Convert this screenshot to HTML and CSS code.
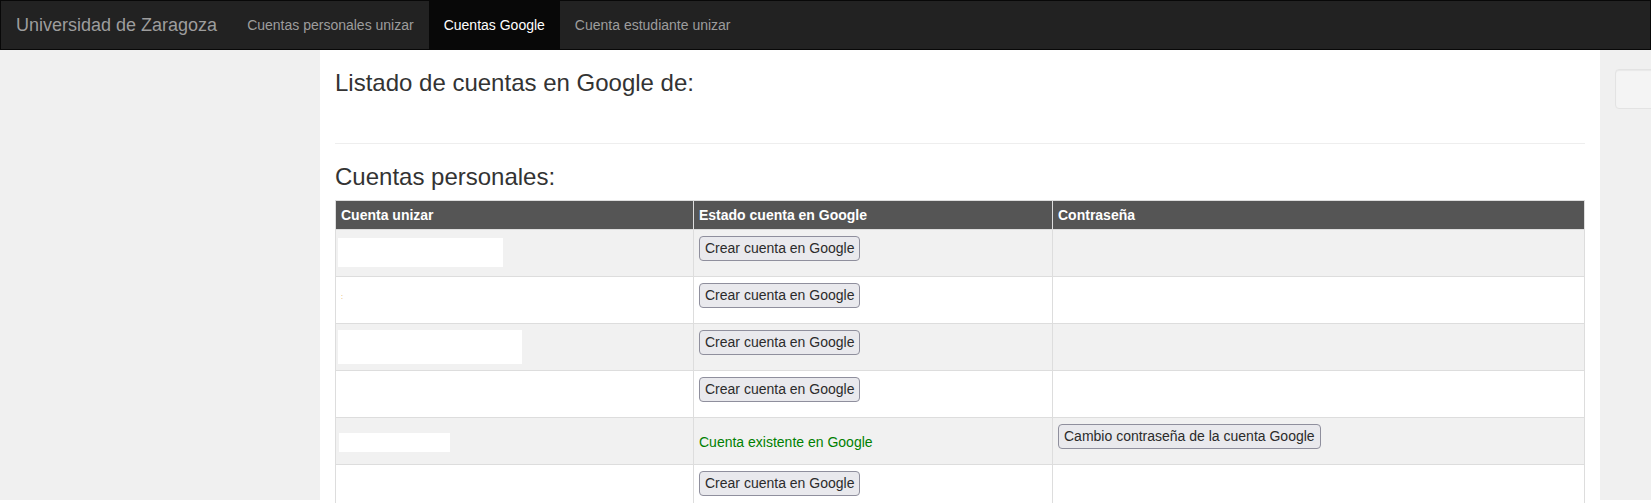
FILE: index.html
```html
<!DOCTYPE html>
<html lang="es">
<head>
<meta charset="utf-8">
<title>Cuentas Google - Universidad de Zaragoza</title>
<link rel="stylesheet" href="styles.css">
</head>
<body>
<nav class="navbar">
  <a class="brand" href="#">Universidad de Zaragoza</a>
  <ul class="nav">
    <li><a href="#">Cuentas personales unizar</a></li>
    <li class="active"><a href="#">Cuentas Google</a></li>
    <li><a href="#">Cuenta estudiante unizar</a></li>
  </ul>
</nav>
<div class="layout">
  <aside class="side"></aside>
  <main class="main">
    <h3 class="title">Listado de cuentas en Google de:</h3>
    <hr class="divider">
    <h3 class="subtitle">Cuentas personales:</h3>
    <table class="accounts">
      <colgroup>
        <col class="c1">
        <col class="c2">
        <col class="c3">
      </colgroup>
      <thead>
        <tr><th>Cuenta unizar</th><th>Estado cuenta en Google</th><th>Contraseña</th></tr>
      </thead>
      <tbody>
        <tr>
          <td><div class="redact redact-1"></div></td>
          <td><button class="btn" type="button">Crear cuenta en Google</button></td>
          <td></td>
        </tr>
        <tr>
          <td><span class="mark">:</span></td>
          <td><button class="btn" type="button">Crear cuenta en Google</button></td>
          <td></td>
        </tr>
        <tr>
          <td><div class="redact redact-3"></div></td>
          <td><button class="btn" type="button">Crear cuenta en Google</button></td>
          <td></td>
        </tr>
        <tr>
          <td></td>
          <td><button class="btn" type="button">Crear cuenta en Google</button></td>
          <td></td>
        </tr>
        <tr>
          <td><div class="redact redact-5"></div></td>
          <td><div class="exists">Cuenta existente en Google</div></td>
          <td><button class="btn" type="button">Cambio contraseña de la cuenta Google</button></td>
        </tr>
        <tr>
          <td></td>
          <td><button class="btn" type="button">Crear cuenta en Google</button></td>
          <td></td>
        </tr>
      </tbody>
    </table>
  </main>
  <aside class="side side-right"><div class="well"></div></aside>
</div>
</body>
</html>
```
FILE: styles.css
```css
* { box-sizing: border-box; }

html, body {
  margin: 0;
  padding: 0;
  overflow: hidden;
  background: #fff;
}

body {
  font-family: "Liberation Sans", Arial, Helvetica, sans-serif;
  font-size: 14px;
  line-height: 20px;
  color: #333;
}

/* Navbar */
.navbar {
  display: flex;
  align-items: stretch;
  height: 50px;
  background: #222;
  border: 1px solid #080808;
}

.brand {
  padding: 0 15px;
  line-height: 48px;
  font-size: 18px;
  color: #9d9d9d;
  text-decoration: none;
}

.nav {
  display: flex;
  list-style: none;
  margin: 0;
  padding: 0;
}

.nav a {
  display: block;
  padding: 0 15px;
  line-height: 48px;
  font-size: 14px;
  color: #9d9d9d;
  text-decoration: none;
}

.nav .active a {
  background: #080808;
  color: #fff;
}

/* Layout */
.layout {
  display: grid;
  grid-template-columns: 320px 1280px 1fr;
  align-items: start;
}

.side {
  height: 450px;
  background: #f0f0f0;
}

.side-right {
  overflow: hidden;
  padding: 19px 0 0 15px;
}

.well {
  width: 290px;
  height: 40px;
  background: #f4f4f4;
  border: 1px solid #e3e3e3;
  border-radius: 4px;
  box-shadow: inset 0 1px 1px rgba(0, 0, 0, 0.05);
}

.main {
  padding: 0 15px;
}

.title,
.subtitle {
  font-size: 24px;
  line-height: 26px;
  font-weight: normal;
  color: #333;
}

.title {
  margin: 20px 0 0;
}

.divider {
  margin: 47px 0 20px;
  height: 0;
  border: 0;
  border-top: 1px solid #eee;
}

.subtitle {
  margin: 0 0 10px;
}

/* Table */
.accounts {
  width: 100%;
  table-layout: fixed;
  border-collapse: collapse;
  border: 1px solid #ddd;
}

.c1 { width: 358px; }
.c2 { width: 359px; }

.accounts th {
  background: #555;
  color: #fff;
  font-weight: bold;
  text-align: left;
  padding: 4px 5px;
  line-height: 20px;
  border: 1px solid #ddd;
}

.accounts td {
  height: 47px;
  padding: 6px 5px 0;
  vertical-align: top;
  border: 1px solid #ddd;
}

.accounts tbody tr:nth-child(odd) td {
  background: #f1f1f1;
}

.btn {
  font-family: "Liberation Sans", Arial, Helvetica, sans-serif;
  font-size: 14px;
  line-height: 17px;
  padding: 3px 5px;
  color: #2b2b2b;
  background: #e9e9ed;
  border: 1px solid #8f8f9d;
  border-radius: 4px;
  margin: 0;
}

.exists {
  margin-top: 8px;
  color: #008000;
}

.redact {
  background: #fff;
  margin-left: -3px;
}

.redact-1 { width: 165px; height: 29px; margin-top: 2px; }
.redact-3 { width: 184px; height: 34px; margin-top: 0; }
.redact-5 { width: 111px; height: 19px; margin-top: 9px; margin-left: -2px; }

.mark {
  display: inline-block;
  margin-top: 10px;
  font-size: 7px;
  line-height: 8px;
  color: #e0a040;
}
```
